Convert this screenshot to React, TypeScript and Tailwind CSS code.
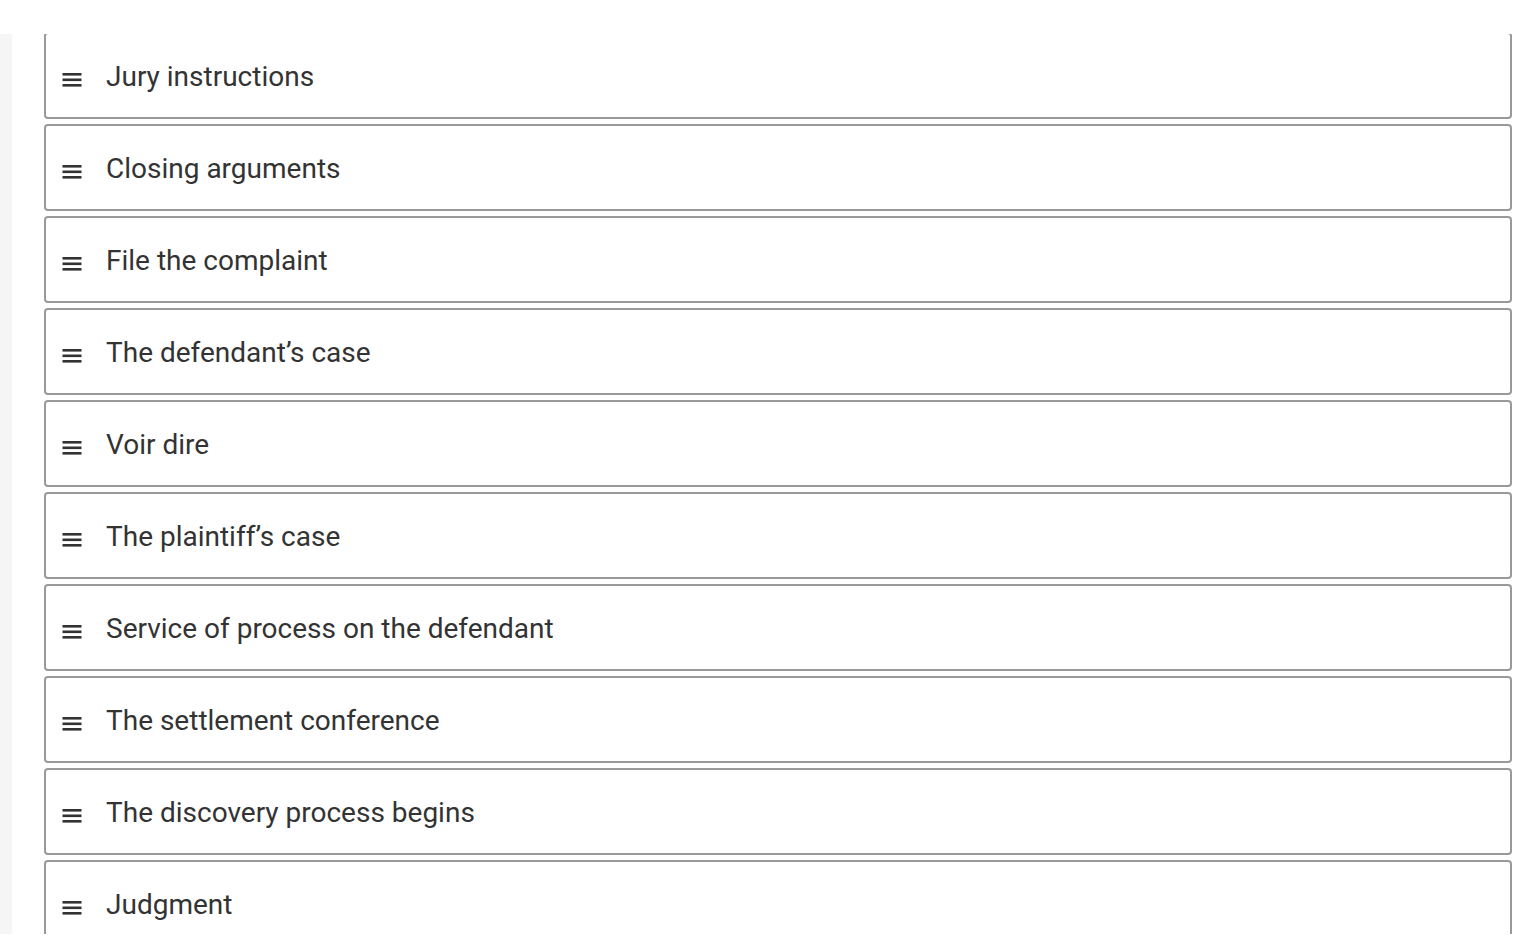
const steps = [
  'Jury instructions',
  'Closing arguments',
  'File the complaint',
  'The defendant\u2019s case',
  'Voir dire',
  'The plaintiff\u2019s case',
  'Service of process on the defendant',
  'The settlement conference',
  'The discovery process begins',
  'Judgment',
]

function DragIcon() {
  return (
    <svg width="20" height="16" viewBox="0 0 20 16" className="mt-[4px] shrink-0">
      <rect x="0.5" y="2" width="19" height="2.6" fill="#333" />
      <rect x="0.5" y="7.5" width="19" height="2.6" fill="#333" />
      <rect x="0.5" y="13" width="19" height="2.6" fill="#333" />
    </svg>
  )
}

export default function App() {
  return (
    <div className="h-screen bg-white font-['Roboto',sans-serif] overflow-hidden">
      <div className="h-[34px]" />
      <div className="flex h-[900px]">
        <div className="w-[12px] bg-[#f5f5f5]" />
        <div className="ml-[32px] mr-[24px] flex-1 overflow-hidden">
          <ul className="-mt-[2px] flex flex-col gap-[5px]">
            {steps.map((s) => (
              <li
                key={s}
                className="flex h-[87px] items-center gap-[24px] rounded-[4px] border-2 border-[#999] bg-white px-[16px] pt-[2px]"
              >
                <DragIcon />
                <span className="text-[28px] leading-none text-[#333]">{s}</span>
              </li>
            ))}
          </ul>
        </div>
      </div>
    </div>
  )
}
